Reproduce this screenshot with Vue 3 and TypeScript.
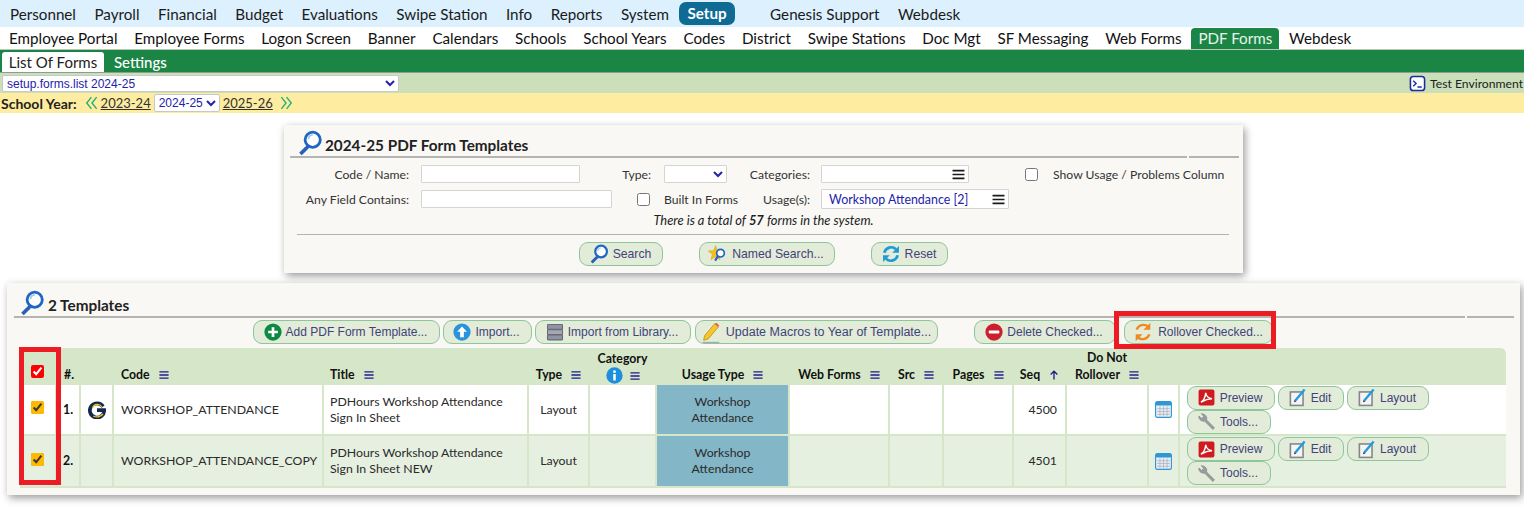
<script setup lang="ts">
import { h } from 'vue'
import type { FunctionalComponent } from 'vue'

type Shape = [string, Record<string, string | number>]

const glassRing: Shape[] = [
  ['path', { d: 'M2 22l7-7 2.4 2.4-7 7z', fill: '#2a5fb8', transform: 'translate(0 -1)' }],
  ['circle', { cx: 14.5, cy: 9, r: 7, fill: '#fff', stroke: '#1f66c4', 'stroke-width': 2.6 }],
  ['path', { d: 'M10.5 8.5a4.5 4.5 0 0 1 4-4', fill: 'none', stroke: '#9cc7ee', 'stroke-width': 1.4 }],
]

const editIcon: Shape[] = [
  ['rect', { x: 3, y: 5, width: 16, height: 17, fill: '#f4f4f4', stroke: '#85868a', 'stroke-width': 2 }],
  ['path', { d: 'M9 16L21 2', stroke: '#1f9be0', 'stroke-width': 3, fill: 'none' }],
  ['path', { d: 'M7.5 18l.8-3 2.2 2z', fill: '#333' }],
]

const icons: Record<string, Shape[]> = {
  glass: glassRing,
  star: [
    ['path', { d: 'M9 2l2.3 6 6.4.4-5 4 1.7 6.3L9 15.2l-5.4 3.5 1.7-6.3-5-4 6.4-.4z', fill: '#f2c21a', stroke: '#d59b0d', 'stroke-width': 0.6 }],
    ['circle', { cx: 15, cy: 11, r: 4.6, fill: '#fff', stroke: '#1f66c4', 'stroke-width': 2 }],
    ['path', { d: 'M12 14.5L8.5 20', stroke: '#2a5fb8', 'stroke-width': 2.6 }],
  ],
  reset: [
    ['path', { d: 'M4 10.5A8.5 8.5 0 0 1 18 6.2', fill: 'none', stroke: '#1d9bd7', 'stroke-width': 3.2 }],
    ['path', { d: 'M21.5 2.5v8h-8z', fill: '#1d9bd7' }],
    ['path', { d: 'M20 13.5A8.5 8.5 0 0 1 6 17.8', fill: 'none', stroke: '#1d9bd7', 'stroke-width': 3.2 }],
    ['path', { d: 'M2.5 21.5v-8h8z', fill: '#1d9bd7' }],
  ],
  rollover: [
    ['path', { d: 'M5 9.5A8 8 0 0 1 17.5 6', fill: 'none', stroke: '#ef8a22', 'stroke-width': 2.6 }],
    ['path', { d: 'M20 2v7.5h-7.5z', fill: '#ef8a22' }],
    ['path', { d: 'M19 14.5A8 8 0 0 1 6.5 18', fill: 'none', stroke: '#ef8a22', 'stroke-width': 2.6 }],
    ['path', { d: 'M4 22v-7.5h7.5z', fill: '#ef8a22' }],
  ],
  plus: [
    ['circle', { cx: 12, cy: 12, r: 11.5, fill: '#0c8a43' }],
    ['path', { d: 'M12 5.5v13M5.5 12h13', stroke: '#fff', 'stroke-width': 3.6 }],
  ],
  up: [
    ['circle', { cx: 12, cy: 12, r: 11.5, fill: '#2b93dc' }],
    ['path', { d: 'M12 4.5l6.5 7H14.5V19h-5v-7.5H5.5z', fill: '#fff' }],
  ],
  books: [
    ['rect', { x: 2, y: 2, width: 20, height: 6.5, rx: 1, fill: '#8e93a8', stroke: '#6b6a70', 'stroke-width': 1.4 }],
    ['rect', { x: 2, y: 9, width: 20, height: 6.5, rx: 1, fill: '#a3a7b8', stroke: '#6b6a70', 'stroke-width': 1.4 }],
    ['rect', { x: 2, y: 16, width: 20, height: 6.5, rx: 1, fill: '#8e93a8', stroke: '#6b6a70', 'stroke-width': 1.4 }],
  ],
  pencil: [
    ['path', { d: 'M5 16L16 3l4 3.4L9 19.5 4 21z', fill: '#f3c52e', stroke: '#c9931a', 'stroke-width': 1 }],
    ['path', { d: 'M16 3l4 3.4 1-1.6-3-2.8z', fill: '#e2606a' }],
    ['path', { d: 'M3 23.5h18', stroke: '#a9a9a9', 'stroke-width': 1.6 }],
  ],
  stop: [
    ['circle', { cx: 12, cy: 12, r: 11.5, fill: '#cc1f2d' }],
    ['rect', { x: 5, y: 10, width: 14, height: 4, rx: 1, fill: '#fff' }],
  ],
  pdf: [
    ['rect', { x: 2, y: 2, width: 20, height: 20, rx: 2.5, fill: '#cf1b1f' }],
    ['path', { d: 'M5 18c3-1.5 6-7 6-12 .6 4 3 7 8 7.5-4 0-9 1.5-14 4.5z', fill: 'none', stroke: '#fff', 'stroke-width': 1.8 }],
  ],
  edit: editIcon,
  wrench: [
    ['path', { d: 'M20 22l2-2-10-10c1-3-.5-7-5-7.5L5.5 2l3 3.6-2.6 2.6L2.4 5.2C2 10 6 12 9.6 11.5z', fill: '#9a9da0', stroke: '#87898b', 'stroke-width': 1 }],
  ],
  cal: [
    ['rect', { x: 2, y: 2, width: 20, height: 20, rx: 2.5, fill: '#e8eef5', stroke: '#2f97d8', 'stroke-width': 1.4 }],
    ['rect', { x: 2, y: 2, width: 20, height: 5, rx: 2, fill: '#2f97d8' }],
    ['path', { d: 'M4 11h16M4 14.5h16M4 18h16M7.5 8v13M12 8v13M16.5 8v13', stroke: '#a6adb8', 'stroke-width': 0.9 }],
  ],
  info: [
    ['circle', { cx: 12, cy: 12, r: 11.5, fill: '#1e8fdc' }],
    ['rect', { x: 10.2, y: 10, width: 3.6, height: 9, fill: '#fff' }],
    ['circle', { cx: 12, cy: 6.6, r: 2, fill: '#fff' }],
  ],
  term: [
    ['rect', { x: 2, y: 2, width: 20, height: 20, rx: 4, fill: '#fff', stroke: '#1c2d9c', 'stroke-width': 2.2 }],
    ['path', { d: 'M6 8l4 4-4 4M12 17h6', fill: 'none', stroke: '#1c2d9c', 'stroke-width': 2 }],
  ],
  logo: [
    ['path', { d: 'M20 7.5A9.5 9.5 0 1 0 21.5 12H12', fill: 'none', stroke: '#14284f', 'stroke-width': 5 }],
    ['path', { d: 'M6 9A7 7 0 0 1 18.5 8', fill: 'none', stroke: '#f2c21a', 'stroke-width': 1.6 }],
    ['path', { d: 'M7 20a10 10 0 0 0 13-3', fill: 'none', stroke: '#f2c21a', 'stroke-width': 1.8 }],
  ],
  menu: [
    ['path', { d: 'M1 4.5h22M1 12h22M1 19.5h22', stroke: '#1c1c8c', 'stroke-width': 3.4 }],
  ],
  menuDark: [
    ['path', { d: 'M1 5h22M1 12h22M1 19h22', stroke: '#1a1a1a', 'stroke-width': 3.2 }],
  ],
  arrow: [
    ['path', { d: 'M12 23V3M4 11l8-8 8 8', fill: 'none', stroke: '#1c1c8c', 'stroke-width': 3.2 }],
  ],
  chevL: [
    ['path', { d: 'M11 2l-8 10 8 10M20 2l-8 10 8 10', fill: 'none', stroke: '#27ad7a', 'stroke-width': 2.4 }],
  ],
  chevR: [
    ['path', { d: 'M4 2l8 10-8 10M13 2l8 10-8 10', fill: 'none', stroke: '#27ad7a', 'stroke-width': 2.4 }],
  ],
}

const Icon: FunctionalComponent<{ name: string; size?: number }> = (props) =>
  h(
    'svg',
    { class: 'ico', width: props.size ?? 16, height: props.size ?? 16, viewBox: '0 0 24 24', 'aria-hidden': 'true' },
    (icons[props.name] ?? []).map(([tag, attrs]) => h(tag, attrs)),
  )

const topNav = ['Personnel', 'Payroll', 'Financial', 'Budget', 'Evaluations', 'Swipe Station', 'Info', 'Reports', 'System']
const subNav = ['Employee Portal', 'Employee Forms', 'Logon Screen', 'Banner', 'Calendars', 'Schools', 'School Years', 'Codes', 'District', 'Swipe Stations', 'Doc Mgt', 'SF Messaging', 'Web Forms']

const searchButtons = [
  { label: 'Search', icon: 'glass', cls: 'b-search' },
  { label: 'Named Search...', icon: 'star', cls: 'b-named' },
  { label: 'Reset', icon: 'reset', cls: 'b-reset' },
]
const toolButtons = [
  { label: 'Add PDF Form Template...', icon: 'plus', cls: 'b-add', size: 18 },
  { label: 'Import...', icon: 'up', cls: 'b-import', size: 18 },
  { label: 'Import from Library...', icon: 'books', cls: 'b-lib', size: 18 },
  { label: 'Update Macros to Year of Template...', icon: 'pencil', cls: 'b-macro', size: 22 },
  { label: 'Delete Checked...', icon: 'stop', cls: 'b-del', size: 18 },
  { label: 'Rollover Checked...', icon: 'rollover', cls: 'b-roll', size: 22 },
]
const rowButtons = [
  { label: 'Preview', icon: 'pdf', cls: 'b-prev' },
  { label: 'Edit', icon: 'edit', cls: 'b-edit' },
  { label: 'Layout', icon: 'edit', cls: 'b-layout' },
  { label: 'Tools...', icon: 'wrench', cls: 'b-tools' },
]

const columns = [
  { key: 'check', w: 35, label: '', align: 'c' },
  { key: 'num', w: 24, label: '#.', align: 'l' },
  { key: 'logo', w: 33, label: '', align: 'c' },
  { key: 'code', w: 210, label: 'Code', menu: true, align: 'l' },
  { key: 'title', w: 205, label: 'Title', menu: true, align: 'l' },
  { key: 'type', w: 61, label: 'Type', menu: true, align: 'c' },
  { key: 'cat', w: 67, label: 'Category', info: true, menu: true, align: 'c' },
  { key: 'usage', w: 133, label: 'Usage Type', menu: true, align: 'c' },
  { key: 'web', w: 100, label: 'Web Forms', menu: true, align: 'c' },
  { key: 'src', w: 54, label: 'Src', menu: true, align: 'c' },
  { key: 'pages', w: 70, label: 'Pages', menu: true, align: 'c' },
  { key: 'seq', w: 53, label: 'Seq', sort: true, align: 'c' },
  { key: 'roll', w: 82, label: 'Rollover', top: 'Do Not', menu: true, align: 'c' },
  { key: 'cal', w: 31, label: '', align: 'c' },
  { key: 'act', w: 328, label: '', align: 'l' },
]

const rows = [
  { n: '1.', logo: true, code: 'WORKSHOP_ATTENDANCE', t1: 'PDHours Workshop Attendance', t2: 'Sign In Sheet', seq: 4500 },
  { n: '2.', logo: false, code: 'WORKSHOP_ATTENDANCE_COPY', t1: 'PDHours Workshop Attendance', t2: 'Sign In Sheet NEW', seq: 4501 },
]
</script>

<template>
  <div class="page">
    <nav class="nav-top">
      <a v-for="n in topNav" :key="n" class="nt">{{ n }}</a>
      <a class="nt setup">Setup</a>
      <a class="nt genesis">Genesis Support</a>
      <a class="nt">Webdesk</a>
    </nav>
    <nav class="nav-sub">
      <a v-for="n in subNav" :key="n" class="ns">{{ n }}</a>
      <a class="ns active">PDF Forms</a>
      <a class="ns">Webdesk</a>
    </nav>
    <div class="nav-green">
      <a class="tab-on">List Of Forms</a>
      <a class="tab-off">Settings</a>
    </div>
    <div class="bar-view">
      <select class="view-select"><option>setup.forms.list 2024-25</option></select>
      <span class="env"><Icon name="term" :size="17" /><span>Test Environment</span></span>
    </div>
    <div class="bar-year">
      <strong class="year-label">School Year:</strong>
      <Icon name="chevL" :size="14" />
      <a class="year-link">2023-24</a>
      <select class="year-select"><option>2024-25</option></select>
      <a class="year-link">2025-26</a>
      <Icon name="chevR" :size="14" />
    </div>

    <section class="panel search-panel">
      <header class="ptitle">
        <Icon name="glass" :size="26" />
        <h2>2024-25 PDF Form Templates</h2>
      </header>
      <div class="rule rule-s"><i></i><i></i></div>
      <div class="frow r1">
        <label class="lbl l-main">Code / Name:</label>
        <input class="txt i-code" type="text" />
        <label class="lbl l-type">Type:</label>
        <select class="sel-type"><option></option></select>
        <label class="lbl l-cat">Categories:</label>
        <span class="multi m-cat"><Icon name="menuDark" :size="13" /></span>
        <input class="chk c-usage" type="checkbox" />
        <span class="lbl t-usage">Show Usage / Problems Column</span>
      </div>
      <div class="frow r2">
        <label class="lbl l-main">Any Field Contains:</label>
        <input class="txt i-any" type="text" />
        <input class="chk c-built" type="checkbox" />
        <span class="lbl t-built">Built In Forms</span>
        <label class="lbl l-usage">Usage(s):</label>
        <span class="multi m-usage"><span class="mval">Workshop Attendance [2]</span><Icon name="menuDark" :size="13" /></span>
      </div>
      <p class="total">There is a total of <b>57</b> forms in the system.</p>
      <div class="hr2"></div>
      <div class="search-actions">
        <button v-for="b in searchButtons" :key="b.label" class="btn" :class="b.cls" type="button">
          <Icon :name="b.icon" :size="20" />{{ b.label }}
        </button>
      </div>
    </section>

    <section class="panel result-panel">
      <header class="ptitle rt">
        <Icon name="glass" :size="26" />
        <h2>2 Templates</h2>
      </header>
      <div class="rule rule-r"><i></i><i></i></div>
      <div class="toolbar">
        <button v-for="b in toolButtons" :key="b.label" class="btn" :class="b.cls" type="button">
          <Icon :name="b.icon" :size="b.size" />{{ b.label }}
        </button>
      </div>
      <div class="table-wrap">
        <table class="grid">
          <colgroup>
            <col v-for="c in columns" :key="c.key" :width="c.w" />
          </colgroup>
          <thead>
            <tr>
              <th v-for="c in columns" :key="c.key" :class="'a-' + c.align">
                <template v-if="c.key === 'check'"><input class="chk red" type="checkbox" checked /></template>
                <template v-else>
                  <div v-if="c.top || c.info" class="th-top">{{ c.top || c.label }}</div>
                  <div class="th-line">
                    <Icon v-if="c.info" name="info" :size="17" class="th-info" />
                    <span v-if="!c.info">{{ c.label }}</span>
                    <Icon v-if="c.menu" name="menu" :size="10" class="th-menu" />
                    <Icon v-if="c.sort" name="arrow" :size="10" class="th-menu" />
                  </div>
                </template>
              </th>
            </tr>
          </thead>
          <tbody>
            <tr v-for="r in rows" :key="r.code">
              <td class="a-c c-check"><input class="chk amber" type="checkbox" checked /></td>
              <td class="num">{{ r.n }}</td>
              <td class="a-c"><Icon v-if="r.logo" name="logo" :size="18" /></td>
              <td class="pad-code">{{ r.code }}</td>
              <td class="pad-title">{{ r.t1 }}<br />{{ r.t2 }}</td>
              <td class="a-c">Layout</td>
              <td></td>
              <td class="a-c usage">Workshop<br />Attendance</td>
              <td></td>
              <td></td>
              <td></td>
              <td class="seq">{{ r.seq }}</td>
              <td></td>
              <td class="a-c"><Icon name="cal" :size="19" /></td>
              <td class="acts">
                <button v-for="b in rowButtons" :key="b.label" class="btn rb" :class="b.cls" type="button">
                  <Icon :name="b.icon" :size="19" />{{ b.label }}
                </button>
              </td>
            </tr>
          </tbody>
        </table>
      </div>
      <div class="mark mark-check"></div>
      <div class="mark mark-roll"></div>
    </section>
  </div>
</template>

<style>
html, body { margin: 0; background: #fff; overflow: hidden; }
</style>

<style scoped>
.page {
  width: 1524px;
  height: 509px;
  overflow: hidden;
  font-family: "Lato", "Open Sans", sans-serif;
  font-size: 12.3px;
  color: #222;
}
.ico { flex: none; display: inline-block; vertical-align: middle; }

.nav-top {
  height: 27px;
  background: #dcf0fe;
  display: flex;
  align-items: center;
  padding-left: 10px;
  gap: 18.5px;
  font-size: 15.2px;
  color: #1a1a1a;
}
.setup {
  background: #0f6a94;
  color: #fff;
  font-weight: 700;
  border-radius: 7px;
  padding: 2px 8px 3px;
  margin-left: -8px;
  margin-right: 17px;
}
.nav-sub {
  height: 23px;
  display: flex;
  align-items: flex-end;
  padding-left: 9px;
  gap: 16.8px;
  font-size: 15.2px;
  color: #111;
  box-sizing: border-box;
  border-bottom: 1px solid #b9c9b5;
}
.ns { line-height: 21px; }
.active {
  background: #1b8545;
  color: #e8f5ec;
  padding: 0 7px;
  margin: 0 -7px;
  border-radius: 4px 4px 0 0;
}
.nav-green {
  height: 23px;
  background: #1b8545;
  display: flex;
  align-items: flex-end;
  padding-left: 2px;
  font-size: 15px;
  box-sizing: border-box;
  border-bottom: 1px solid #8aa08f;
}
.tab-on {
  background: #fff;
  color: #222;
  width: 102px;
  text-align: center;
  line-height: 20px;
  border-radius: 3px 3px 0 0;
}
.tab-off { color: #fff; font-weight: 500; margin-left: 10px; line-height: 20px; }

.bar-view {
  height: 20px;
  background: #cbdfbb;
  display: flex;
  align-items: center;
  justify-content: space-between;
  padding-left: 2px;
}
.view-select {
  width: 397px;
  height: 17px;
  font: 12px "Liberation Sans", sans-serif;
  color: #2222aa;
  background: #fff;
  border: 1px solid #c8c8c8;
  border-radius: 2px;
  padding: 0;
}
.env {
  display: flex;
  align-items: center;
  gap: 4px;
  width: 115px;
  white-space: nowrap;
  font-size: 12.2px;
  color: #222;
}
.bar-year {
  height: 20px;
  background: #feeca0;
  display: flex;
  align-items: center;
  padding-left: 1px;
  font-size: 13px;
}
.year-label { font-weight: 700; font-size: 14px; margin-right: 8px; }
.year-link { text-decoration: underline; margin: 0 1px 0 2px; color: #333; }
.bar-year .year-link:last-of-type { margin: 0 6px 0 3px; }
.year-select {
  width: 66px;
  height: 18px;
  margin: 0 0 0 2px;
  font: 12px "Liberation Sans", sans-serif;
  color: #2222aa;
  background: #fff;
  border: 1px solid #c8c8c8;
  border-radius: 2px;
  padding: 0;
}

.panel {
  background: #f9f8f4;
  box-shadow: 2px 3px 8px rgba(0, 0, 0, 0.4);
  position: relative;
  box-sizing: border-box;
}
.search-panel {
  width: 959px;
  height: 148px;
  margin: 12px 0 0 284px;
}
.result-panel {
  width: 1513px;
  height: 212px;
  margin: 10px 0 0 7px;
}
.ptitle {
  display: flex;
  align-items: flex-end;
  height: 31px;
  padding-left: 13px;
  gap: 2px;
}
.ptitle h2 {
  margin: 0 0 2px;
  font-size: 15.3px;
  font-weight: 700;
  color: #222;
}
.rt { height: 33px; padding-left: 12px; gap: 3px; }
.rule { display: flex; height: 2px; gap: 2px; }
.rule i { display: block; background: #b4b4b0; height: 2px; }
.rule-s { margin-left: 6px; }
.rule-s i:first-child { width: 897px; }
.rule-s i:last-child { width: 50px; }
.rule-r { margin-left: 7px; }
.rule-r i:first-child { width: 1451px; }
.rule-r i:last-child { width: 47px; }

.frow { display: flex; align-items: center; height: 18px; padding-left: 13px; }
.r1 { margin-top: 7px; }
.r2 { margin-top: 7px; }
.lbl { white-space: nowrap; text-align: right; color: #333; font-size: 12.2px; flex: none; }
.l-main { width: 112px; }
.txt, .multi, .sel-type {
  box-sizing: border-box;
  height: 18px;
  background: #fff;
  border: 1.5px solid #d4d4d4;
  border-radius: 1px;
  padding: 0;
  flex: none;
}
.i-code { width: 159px; margin-left: 12px; }
.l-type { width: 71px; }
.sel-type { width: 63px; margin-left: 13px; color: #2222aa; }
.l-cat { width: 83px; }
.multi { display: flex; align-items: center; justify-content: flex-end; padding-right: 3px; margin-left: 11px; }
.m-cat { width: 148px; }
.m-usage { width: 188px; height: 20px; justify-content: space-between; padding-left: 7px; }
.mval { color: #2222aa; font-size: 12.4px; white-space: nowrap; }
.chk { width: 13px; height: 13px; margin: 0; flex: none; }
.c-usage { margin-left: 56px; }
.t-usage { margin-left: 15px; }
.i-any { width: 191px; margin-left: 12px; }
.c-built { margin-left: 25px; }
.t-built { margin-left: 14px; width: 74px; text-align: left; }
.l-usage { width: 72px; }
.total {
  margin: 3px 0 0;
  text-align: center;
  font-style: italic;
  font-size: 12.9px;
  line-height: 18px;
  color: #222;
}
.total b { font-weight: 700; }
.hr2 { height: 1px; background: #b4b4b0; margin: 5px 14px 0 13px; }
.search-actions { display: flex; padding-left: 295px; margin-top: 7px; }

.btn {
  box-sizing: border-box;
  height: 24px;
  display: inline-flex;
  align-items: center;
  justify-content: center;
  gap: 4px;
  padding: 0 2px 0 0;
  background: #e3ebd9;
  border: 1.5px solid #8cc79a;
  border-radius: 9px;
  font: 12px "Liberation Sans", Arial, sans-serif;
  color: #3f4478;
  white-space: nowrap;
  flex: none;
}
.search-actions .btn { font-size: 12.2px; }
.b-search { width: 84px; }
.b-named { width: 136px; margin-left: 36px; }
.b-reset { width: 77px; margin-left: 36px; }

.toolbar { display: flex; padding-left: 246px; margin-top: 1px; padding-top: 1px; height: 28px; }
.b-add { width: 187px; }
.b-import { width: 89px; margin-left: 3px; }
.b-lib { width: 156px; margin-left: 3px; }
.b-macro { width: 243px; margin-left: 4px; font-size: 12.5px; }
.b-del { width: 142px; margin-left: 36px; }
.b-roll { width: 149px; margin-left: 8px; }

.table-wrap {
  width: 1486px;
  margin-left: 13px;
  border-radius: 6px 6px 0 0;
  overflow: hidden;
  background: #d5e7c8;
}
.grid {
  width: 1486px;
  table-layout: fixed;
  border-collapse: collapse;
  font-size: 12.3px;
  color: #2a2a2a;
}
.grid th {
  height: 35px;
  padding: 0;
  vertical-align: bottom;
  background: #d5e7c8;
  font-weight: 700;
  color: #111;
  white-space: nowrap;
}
.grid td {
  padding: 0;
  border: 2px solid #d5e7c8;
  height: 49px;
  white-space: nowrap;
  line-height: 16px;
}
.grid tbody tr:first-child td { background: #fff; }
.grid tbody tr:nth-child(2) td { background: #e6f0e1; height: 50px; }
.grid tbody tr td.usage { background: #83b6c6; }
.a-c { text-align: center; }
.a-l { text-align: left; }
.grid th.a-l { padding-left: 8px; }
.grid th:nth-child(1) { padding-right: 2px; }
.grid th:nth-child(2) { padding-left: 8px; }
.grid th:nth-child(5) { padding-left: 7px; }
.grid td.c-check { padding-right: 2px; }
.th-top { line-height: 15px; margin-bottom: 1px; }
.th-line { display: flex; align-items: center; line-height: 18px; gap: 8px; margin-bottom: -1px; }
.a-c .th-line { justify-content: center; }
.th-info { margin-right: -2px; }
.th-menu { margin-left: 1px; }
.red { accent-color: #ff0000; margin-bottom: 5px; }
.amber { accent-color: #ffb900; }
.grid td.num { font-weight: 700; padding-left: 6px; color: #111; }
.grid td.pad-code { padding-left: 7px; }
.grid td.pad-title { padding-left: 6px; }
.grid td.seq { text-align: right; padding-right: 8px; }
.grid td.acts {
  padding: 0 60px 0 7px;
  white-space: normal;
  line-height: 0;
  font-size: 0;
}
.rb { margin: 0 3px 0 0; vertical-align: top; padding-right: 3px; }
.b-prev { width: 88px; }
.b-edit { width: 66px; }
.b-layout { width: 82px; }
.b-tools { width: 84px; }

.mark {
  position: absolute;
  box-sizing: border-box;
  border: 5px solid #ed1c24;
  pointer-events: none;
}
.mark-check { left: 12px; top: 64px; width: 42px; height: 138px; }
.mark-roll { left: 1107px; top: 28px; width: 162px; height: 38px; }
</style>
